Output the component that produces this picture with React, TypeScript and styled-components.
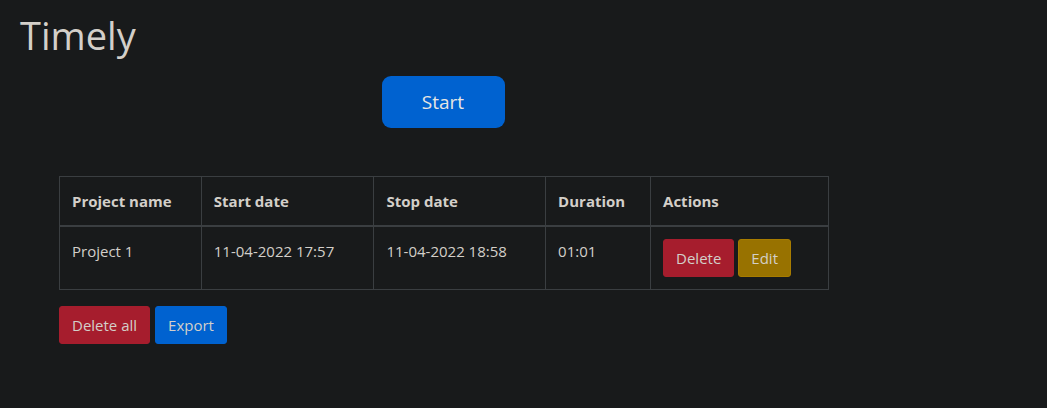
import styled, { createGlobalStyle } from "styled-components"

const GlobalStyle = createGlobalStyle`
    html, body {
        margin: 0;
        background-color: #181a1b;
        color: #d3cfc9;
        font-family: "Open Sans", "Noto Sans", sans-serif;
        font-size: 16px;
    }
`

const Page = styled.div`
    min-height: 408px;
    padding: 13px 20px 0 20px;
    box-sizing: border-box;
`

const Title = styled.h1`
    margin: 0 0 17px 0;
    font-size: 38px;
    font-weight: 400;
    line-height: 1.2;
`

const Content = styled.div`
    width: 770px;
    margin-left: 39px;
    display: flex;
    flex-direction: column;
`

const StartRow = styled.div`
    display: flex;
    justify-content: center;
    margin-bottom: 48px;
`

const StartButton = styled.button`
    width: 123px;
    height: 52px;
    margin-right: 2px;
    border: none;
    border-radius: 9px;
    background-color: #0062d0;
    color: #e8e6e3;
    font-family: inherit;
    font-size: 19px;
    cursor: pointer;
`

const Table = styled.table`
    width: 100%;
    border-collapse: collapse;
    border: 1px solid #3a3e41;
`

const HeadCell = styled.th<{ $width: number }>`
    width: ${props => props.$width}px;
    padding: 12px;
    text-align: left;
    font-weight: 700;
    font-size: 15px;
    line-height: 24px;
    border: 1px solid #3a3e41;
    border-bottom: 2px solid #3a3e41;
    box-sizing: border-box;
`

const Cell = styled.td`
    padding: 12px;
    vertical-align: top;
    font-size: 15px;
    line-height: 24px;
    border: 1px solid #3a3e41;
`

const Actions = styled.div`
    display: flex;
    gap: 4px;
`

const ActionButton = styled.button<{ $variant: "danger" | "warning" | "primary" }>`
    height: 38px;
    padding: 0 12px;
    border: 1px solid ${props =>
        props.$variant === "danger" ? "#a61d2d" : props.$variant === "warning" ? "#a77c00" : "#0062d0"};
    border-radius: 3px;
    background-color: ${props =>
        props.$variant === "danger" ? "#a61d2d" : props.$variant === "warning" ? "#987200" : "#0062d0"};
    color: #d3cfc9;
    font-family: inherit;
    font-size: 15px;
    cursor: pointer;
`

const Footer = styled.div`
    display: flex;
    gap: 5px;
    margin-top: 16px;
`

const columns = [
    { label: "Project name", width: 142 },
    { label: "Start date", width: 173 },
    { label: "Stop date", width: 172 },
    { label: "Duration", width: 105 },
    { label: "Actions", width: 178 },
]

const rows = [
    { name: "Project 1", start: "11-04-2022 17:57", stop: "11-04-2022 18:58", duration: "01:01" },
]

const App = () => {
    return (
        <>
            <GlobalStyle />
            <Page>
                <Title>Timely</Title>
                <Content>
                    <StartRow>
                        <StartButton>Start</StartButton>
                    </StartRow>
                    <Table>
                        <thead>
                            <tr>
                                {columns.map(c => (
                                    <HeadCell key={c.label} $width={c.width}>{c.label}</HeadCell>
                                ))}
                            </tr>
                        </thead>
                        <tbody>
                            {rows.map(r => (
                                <tr key={r.name}>
                                    <Cell>{r.name}</Cell>
                                    <Cell>{r.start}</Cell>
                                    <Cell>{r.stop}</Cell>
                                    <Cell>{r.duration}</Cell>
                                    <Cell>
                                        <Actions>
                                            <ActionButton $variant="danger">Delete</ActionButton>
                                            <ActionButton $variant="warning">Edit</ActionButton>
                                        </Actions>
                                    </Cell>
                                </tr>
                            ))}
                        </tbody>
                    </Table>
                    <Footer>
                        <ActionButton $variant="danger">Delete all</ActionButton>
                        <ActionButton $variant="primary">Export</ActionButton>
                    </Footer>
                </Content>
            </Page>
        </>
    )
}

export default App
